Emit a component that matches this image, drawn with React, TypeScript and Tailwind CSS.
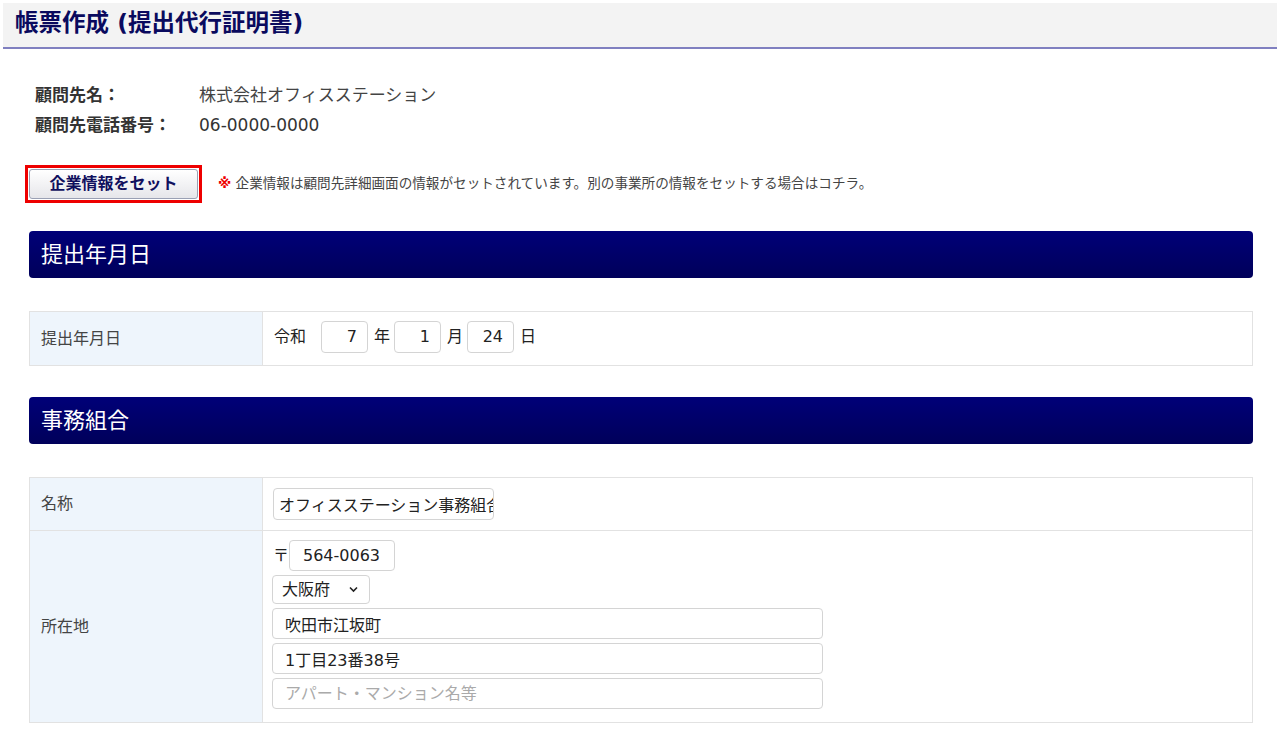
import React from "react";

const font = { fontFamily: '"DejaVu Sans", "Noto Sans CJK JP", "Noto Sans", sans-serif' };

function SectionHeader({ title }: { title: string }) {
  return (
    <div className="h-[47px] rounded-[4px] bg-gradient-to-b from-[#000078] to-[#00005a] flex items-center pl-[12px] text-white text-[22px] leading-none">
      {title}
    </div>
  );
}

const inputCls =
  "border border-[#d4d4d4] rounded-[4px] bg-white text-[16px] text-[#222] outline-none";

const labelCls =
  "w-[233px] shrink-0 bg-[#eef5fc] border-r border-[#e2e2e2] flex items-center pl-[11px] text-[16px] text-[#444]";

export default function App() {
  return (
    <div className="w-[1280px] h-[729px] bg-white overflow-hidden text-[#333]" style={font}>
      <div className="mx-[3px] mt-[3px] h-[44px] bg-[#f3f3f3] flex items-center pl-[12px]">
        <h1 className="text-[23.5px] font-bold text-[#0a0a5e] leading-none -mt-[2px]">帳票作成 (提出代行証明書)</h1>
      </div>
      <div className="mx-[3px] h-[2px] bg-[#8080c0]" />

      <div className="pl-[29px] pr-[27px]">
        <div className="pl-[6px] pt-[32px] text-[17px]">
          <div className="flex h-[30px] items-center">
            <span className="w-[164px] font-bold text-[#333]">顧問先名：</span>
            <span className="text-[#444]">株式会社オフィスステーション</span>
          </div>
          <div className="flex h-[30px] items-center">
            <span className="w-[164px] font-bold text-[#333]">顧問先電話番号：</span>
            <span className="text-[#333]">06-0000-0000</span>
          </div>
        </div>

        <div className="flex items-center mt-[24px] -ml-[4px]">
          <div className="border-[3px] border-[#ee0000] w-[177px] h-[38px] flex">
            <button className="flex-1 m-px rounded-[3px] border border-[#9aa0b4] bg-gradient-to-b from-white to-[#e6e6ea] text-[16px] font-bold text-[#10105e] leading-none">
              企業情報をセット
            </button>
          </div>
          <p className="ml-[16px] text-[13.6px] text-[#444] leading-none">
            <span className="text-[#ee0000] font-bold">※</span> 企業情報は顧問先詳細画面の情報がセットされています。別の事業所の情報をセットする場合はコチラ。
          </p>
        </div>

        <div className="mt-[28px]">
          <SectionHeader title="提出年月日" />
        </div>

        <div className="mt-[33px] border border-[#e2e2e2] flex h-[55px]">
          <div className={labelCls}>提出年月日</div>
          <div className="flex items-center pl-[11px] pb-[4px] text-[16px] text-[#222]">
            <span>令和</span>
            <input className={inputCls + " h-[32px] w-[47px] ml-[15px] text-right pr-[10px]"} defaultValue="7" />
            <span className="ml-[6px]">年</span>
            <input className={inputCls + " h-[32px] w-[47px] ml-[4px] text-right pr-[10px]"} defaultValue="1" />
            <span className="ml-[6px]">月</span>
            <input className={inputCls + " h-[32px] w-[47px] ml-[4px] text-right pr-[10px]"} defaultValue="24" />
            <span className="ml-[6px]">日</span>
          </div>
        </div>

        <div className="mt-[31px]">
          <SectionHeader title="事務組合" />
        </div>

        <div className="mt-[33px] border border-[#e2e2e2]">
          <div className="flex h-[53px] border-b border-[#e2e2e2]">
            <div className={labelCls}>名称</div>
            <div className="flex items-center pl-[10px]">
              <input
                className={inputCls + " h-[32px] w-[221px] pl-[5px]"}
                defaultValue="オフィスステーション事務組合"
              />
            </div>
          </div>
          <div className="flex h-[191px]">
            <div className={labelCls}>所在地</div>
            <div className="flex flex-col pl-[9px] pt-[9px] gap-[4px] text-[16px] text-[#222]">
              <div className="flex items-center">
                <span className="w-[17px] pl-[1px]">〒</span>
                <input className={inputCls + " w-[106px] pl-[13px] h-[31px]"} defaultValue="564-0063" />
              </div>
              <div className="relative w-[98px] h-[29px]">
                <select
                  className="appearance-none w-[98px] h-[29px] border border-[#d4d4d4] rounded-[4px] bg-white pl-[9px] text-[16px] text-[#222] outline-none"
                  defaultValue="大阪府"
                >
                  <option>大阪府</option>
                </select>
                <svg className="absolute right-[12px] top-[11px] pointer-events-none" width="9" height="7" viewBox="0 0 9 7">
                  <path d="M1 1.5 L4.5 5 L8 1.5" fill="none" stroke="#222" strokeWidth="1.6" />
                </svg>
              </div>
              <input className={inputCls + " w-[551px] pl-[12px] h-[31px]"} defaultValue="吹田市江坂町" />
              <input className={inputCls + " w-[551px] pl-[12px] h-[31px]"} defaultValue="1丁目23番38号" />
              <input
                className={inputCls + " w-[551px] pl-[12px] h-[31px] placeholder:text-[#aaa]"}
                placeholder="アパート・マンション名等"
              />
            </div>
          </div>
        </div>
      </div>
    </div>
  );
}
